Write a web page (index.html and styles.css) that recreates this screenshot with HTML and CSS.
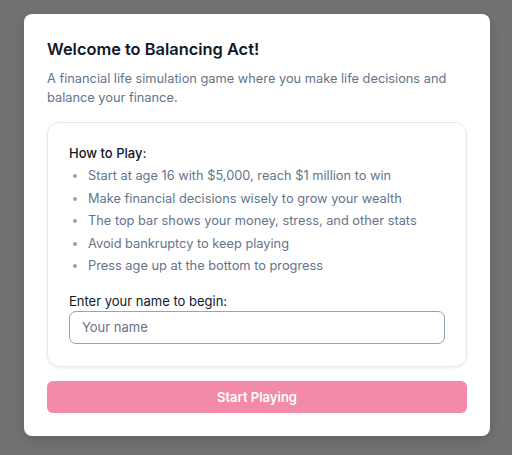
FILE: index.html
```html
<!DOCTYPE html>
<html lang="en">
<head>
    <meta charset="UTF-8">
    <meta name="viewport" content="width=device-width, initial-scale=1.0">
    <title>Balancing Act</title>
    <link rel="stylesheet" href="styles.css">
</head>
<body>
    <div class="overlay">
        <div class="welcome-card">
            <h2>Welcome to Balancing Act!</h2>
            <p class="intro">A financial life simulation game where you make life decisions and balance your finance.</p>

            <div class="how-to">
                <h3>How to Play:</h3>
                <ul class="rules">
                    <li>Start at age 16 with $5,000, reach $1 million to win</li>
                    <li>Make financial decisions wisely to grow your wealth</li>
                    <li>The top bar shows your money, stress, and other stats</li>
                    <li>Avoid bankruptcy to keep playing</li>
                    <li>Press age up at the bottom to progress</li>
                </ul>

                <label for="playerName" class="name-label">Enter your name to begin:</label>
                <input type="text" id="playerName" class="name-input" placeholder="Your name">
            </div>

            <button type="button" class="start-btn" disabled>Start Playing</button>
        </div>
    </div>
</body>
</html>
```

FILE: styles.css
```css
/* General reset */
* {
    margin: 0;
    padding: 0;
    box-sizing: border-box;
}

body {
    font-family: Inter, "Noto Sans", sans-serif;
    background-color: #727274;
    height: 100vh;
}

/* Dimmed backdrop */
.overlay {
    display: flex;
    justify-content: center;
    padding: 14px 0 0 2px;
}

/* Modal card */
.welcome-card {
    background-color: white;
    width: 466px;
    padding: 23px;
    border-radius: 8px;
    box-shadow: 0 4px 12px rgba(0, 0, 0, 0.15);
}

h2 {
    font-size: 16.4px;
    font-weight: 600;
    line-height: 24px;
    color: #111827;
    margin-bottom: 8px;
}

.intro {
    font-size: 12.8px;
    line-height: 19px;
    color: #64748b;
    margin-bottom: 15px;
}

/* How to play box */
.how-to {
    border: 1px solid #e5e7eb;
    border-radius: 12px;
    padding: 21px 21px 22px;
    box-shadow: 0 1px 3px rgba(0, 0, 0, 0.08);
}

h3 {
    font-size: 13px;
    font-weight: 500;
    line-height: 18px;
    color: #111827;
    margin-bottom: 3px;
}

.rules {
    list-style: disc;
    padding-left: 19px;
    margin-bottom: 15px;
}

.rules li {
    font-size: 12.8px;
    line-height: 22.5px;
    color: #64748b;
}

.rules li::marker {
    color: #94a3b8;
}

.name-label {
    display: block;
    font-size: 13px;
    line-height: 16px;
    color: #111827;
    margin-bottom: 2px;
}

.name-input {
    width: 100%;
    height: 33px;
    padding: 0 12px;
    font-family: inherit;
    font-size: 13px;
    color: #111827;
    border: 1px solid #94a3b8;
    border-radius: 7px;
    background-color: white;
}

.name-input::placeholder {
    color: #64748b;
}

/* Button */
.start-btn {
    display: block;
    width: 100%;
    height: 32px;
    margin-top: 14px;
    font-family: inherit;
    font-size: 13px;
    font-weight: 600;
    color: white;
    background-color: #f38aa8;
    border: none;
    border-radius: 6px;
}
```
